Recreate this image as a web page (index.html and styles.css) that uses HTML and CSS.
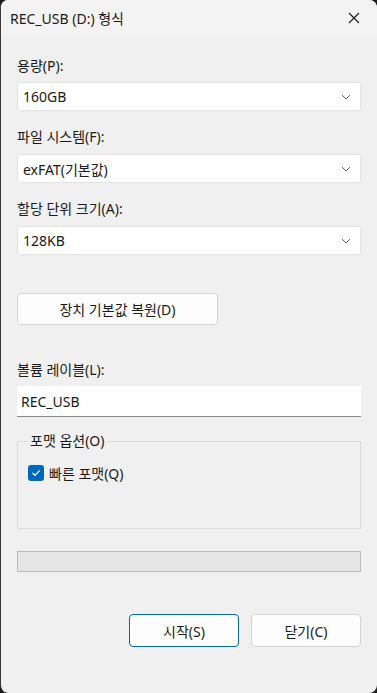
FILE: index.html
```html
<!DOCTYPE html>
<html lang="ko">
<head>
  <meta charset="UTF-8" />
  <meta name="viewport" content="width=device-width, initial-scale=1.0" />
  <title>REC_USB (D:) 형식</title>
  <link rel="stylesheet" href="styles.css">
</head>
<body>

<div class="window">
  <!-- 제목 표시줄 -->
  <div class="titlebar">
    <span class="title">REC_USB (D:) 형식</span>
    <svg class="close" width="12" height="12" viewBox="0 0 12 12">
      <path d="M1 1 L11 11 M11 1 L1 11" stroke="#1a1a1a" stroke-width="1.1" fill="none" />
    </svg>
  </div>

  <div class="content">
    <label class="label first">용량(P):</label>
    <div class="combo">
      <span>160GB</span>
      <svg class="chev" width="10" height="6" viewBox="0 0 10 6"><path d="M1 1 L5 5 L9 1" stroke="#606060" stroke-width="1" fill="none" /></svg>
    </div>

    <label class="label">파일 시스템(F):</label>
    <div class="combo">
      <span>exFAT(기본값)</span>
      <svg class="chev" width="10" height="6" viewBox="0 0 10 6"><path d="M1 1 L5 5 L9 1" stroke="#606060" stroke-width="1" fill="none" /></svg>
    </div>

    <label class="label">할당 단위 크기(A):</label>
    <div class="combo">
      <span>128KB</span>
      <svg class="chev" width="10" height="6" viewBox="0 0 10 6"><path d="M1 1 L5 5 L9 1" stroke="#606060" stroke-width="1" fill="none" /></svg>
    </div>

    <button class="btn restore">장치 기본값 복원(D)</button>

    <label class="label volume">볼륨 레이블(L):</label>
    <div class="textbox">REC_USB</div>

    <fieldset class="group">
      <legend>포맷 옵션(O)</legend>
      <div class="check-row">
        <span class="checkbox">
          <svg width="10" height="8" viewBox="0 0 10 8"><path d="M1.5 4 L4 6.3 L8.5 1.5" stroke="#fff" stroke-width="1.2" fill="none" /></svg>
        </span>
        <span>빠른 포맷(Q)</span>
      </div>
    </fieldset>

    <div class="progress"></div>

    <div class="actions">
      <button class="btn default">시작(S)</button>
      <button class="btn">닫기(C)</button>
    </div>
  </div>
</div>

</body>
</html>
```

FILE: styles.css
```css
* { box-sizing: border-box; }
html, body {
  margin: 0;
  height: 100%;
}
body {
  background-color: #1c1c1c;
  font-family: 'Noto Sans', 'Noto Sans CJK KR', sans-serif;
  font-size: 14px;
  color: #1a1a1a;
}
.window {
  height: 693px;
  background-color: #f0f0f0;
  border-left: 1px solid #3a3a3a;
  border-radius: 8px;
  overflow: hidden;
}
.titlebar {
  height: 36px;
  display: flex;
  align-items: center;
  justify-content: space-between;
  padding: 0 17px 0 9px;
  background-color: #f3f3f3;
}
.title {
  font-size: 14px;
}
.content {
  display: flex;
  flex-direction: column;
  padding: 0 16px 0 16px;
}
.label {
  line-height: 20px;
  margin-top: 16px;
  margin-bottom: 7px;
}
.label.first {
  margin-top: 20px;
  margin-bottom: 6px;
}
.combo {
  height: 29px;
  background-color: #fff;
  border: 1px solid #e3e3e3;
  border-radius: 2px;
  display: flex;
  align-items: center;
  justify-content: space-between;
  padding: 0 9px 0 5px;
}
.btn {
  font-family: 'Noto Sans', 'Noto Sans CJK KR', sans-serif;
  font-size: 14px;
  color: #1a1a1a;
  background-color: #fdfdfd;
  border: 1px solid #d4d4d4;
  border-radius: 4px;
  height: 33px;
  padding: 0;
}
.restore {
  width: 201px;
  height: 32px;
  margin-top: 38px;
}
.label.volume {
  margin-top: 35px;
  margin-bottom: 6px;
}
.textbox {
  height: 31px;
  background-color: #fff;
  border-bottom: 1px solid #8a8a8a;
  display: flex;
  align-items: center;
  padding: 0 4px;
}
.group {
  margin: 14px 0 0 0;
  padding: 4px 10px 0 10px;
  height: 98px;
  border: 1px solid #dcdcdc;
}
.group legend {
  padding: 0 2px;
  line-height: 20px;
}
.check-row {
  display: flex;
  align-items: center;
  gap: 5px;
  margin-top: 8px;
}
.checkbox {
  width: 16px;
  height: 16px;
  background-color: #0067c0;
  border-radius: 3px;
  display: flex;
  align-items: center;
  justify-content: center;
}
.progress {
  height: 21px;
  margin-top: 22px;
  background-color: #e6e6e6;
  border: 1px solid #bcbcbc;
}
.actions {
  display: flex;
  justify-content: flex-end;
  gap: 12px;
  margin-top: 42px;
}
.actions .btn {
  width: 110px;
}
.btn.default {
  border-color: #0067c0;
}
```
